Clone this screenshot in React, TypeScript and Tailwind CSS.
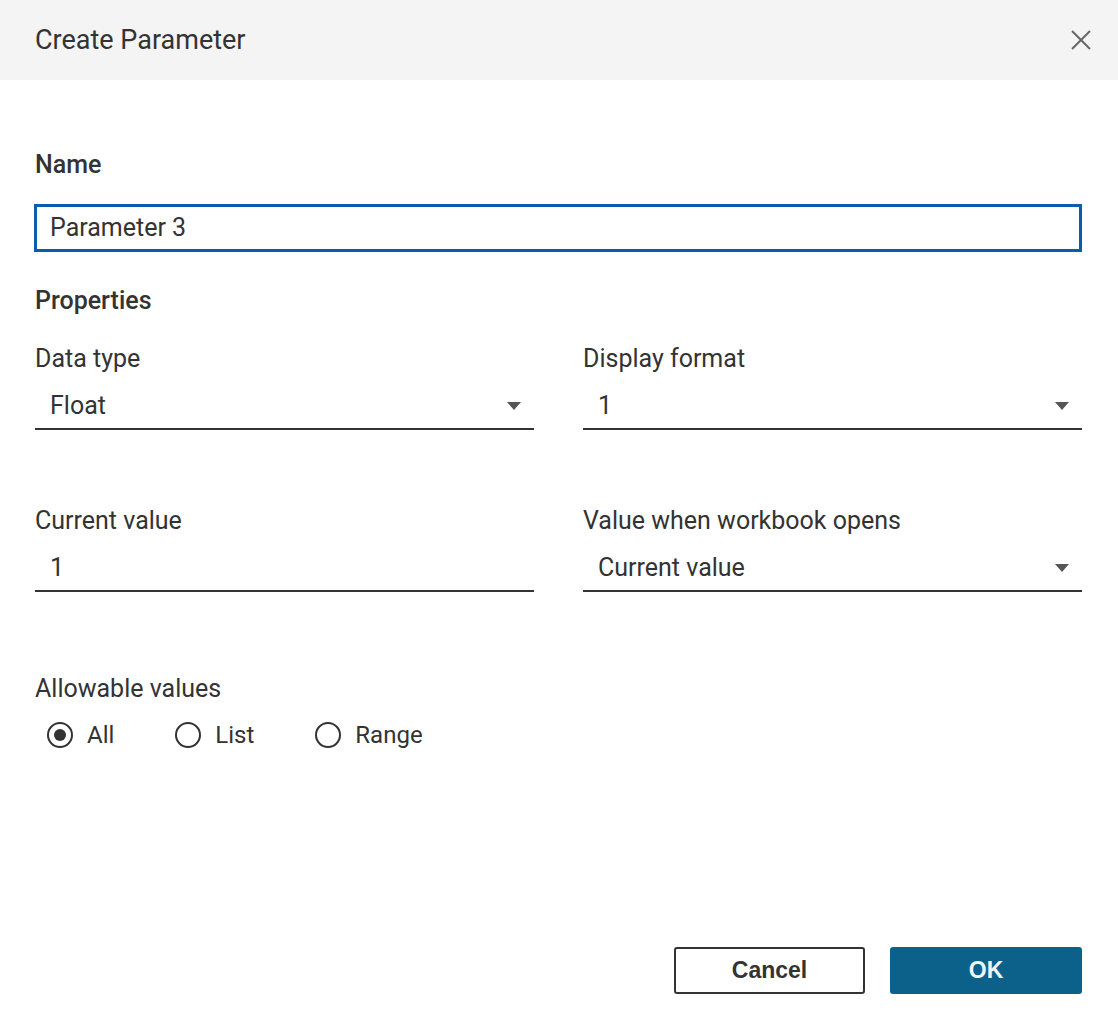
const Caret = () => (
  <svg width="16" height="10" viewBox="0 0 16 10" className="shrink-0">
    <path d="M1 1h14L8 9z" fill="#555555" />
  </svg>
);

const SelectField = ({ label, value, dropdown }: { label: string; value: string; dropdown?: boolean }) => (
  <div>
    <div className="text-[25px] leading-[28px] text-[#333333]">{label}</div>
    <div className="mt-[11px] flex h-[46px] items-center justify-between border-b-2 border-[#333333] pl-[15px] pr-[12px]">
      <span className="text-[25px] text-[#333333]">{value}</span>
      {dropdown && <Caret />}
    </div>
  </div>
);

const Radio = ({ label, checked }: { label: string; checked?: boolean }) => (
  <label className="flex items-center gap-[14px]">
    <span className="flex h-[26px] w-[26px] items-center justify-center rounded-full border-2 border-[#333333]">
      {checked && <span className="h-[12px] w-[12px] rounded-full bg-[#333333]" />}
    </span>
    <span className="text-[24px] leading-[28px] text-[#333333]">{label}</span>
  </label>
);

export default function App() {
  return (
    <div className="flex h-[1026px] w-[1118px] flex-col bg-white font-['Roboto',sans-serif] text-[#333333]">
      {/* header */}
      <div className="flex h-[80px] items-center justify-between bg-[#f4f4f4] pl-[35px] pr-[26px]">
        <h1 className="text-[27px] font-normal text-[#333333]">Create Parameter</h1>
        <svg width="22" height="22" viewBox="0 0 22 22">
          <path d="M2 2L20 20M20 2L2 20" stroke="#666666" strokeWidth="2" />
        </svg>
      </div>

      <div className="flex flex-1 flex-col pl-[35px] pr-[36px]">
        <div className="mt-[71px] text-[25px] font-medium leading-[28px]">Name</div>
        <div className="mt-[25px] -ml-[1px] flex h-[48px] items-center border-[3px] border-[#0b5cab] pl-[13px] text-[25px]">
          Parameter 3
        </div>

        <div className="mt-[35px] text-[25px] font-medium leading-[28px]">Properties</div>

        <div className="mt-[30px] grid grid-cols-2 gap-x-[49px] gap-y-[77px]">
          <SelectField label="Data type" value="Float" dropdown />
          <SelectField label="Display format" value="1" dropdown />
          <SelectField label="Current value" value="1" />
          <SelectField label="Value when workbook opens" value="Current value" dropdown />
        </div>

        <div className="mt-[83px] text-[25px] leading-[28px]">Allowable values</div>
        <div className="mt-[18px] flex items-center gap-[61px] pl-[12px]">
          <Radio label="All" checked />
          <Radio label="List" />
          <Radio label="Range" />
        </div>

        <div className="mt-auto mb-[32px] flex justify-end gap-[25px]">
          <button className="h-[47px] w-[191px] rounded-[3px] border-2 border-[#333333] bg-white font-['Liberation_Sans',sans-serif] text-[23px] font-bold text-[#333333]">
            Cancel
          </button>
          <button className="h-[47px] w-[192px] rounded-[3px] bg-[#0b6189] font-['Liberation_Sans',sans-serif] text-[23px] font-bold text-[#eef4f8]">
            OK
          </button>
        </div>
      </div>
    </div>
  );
}
